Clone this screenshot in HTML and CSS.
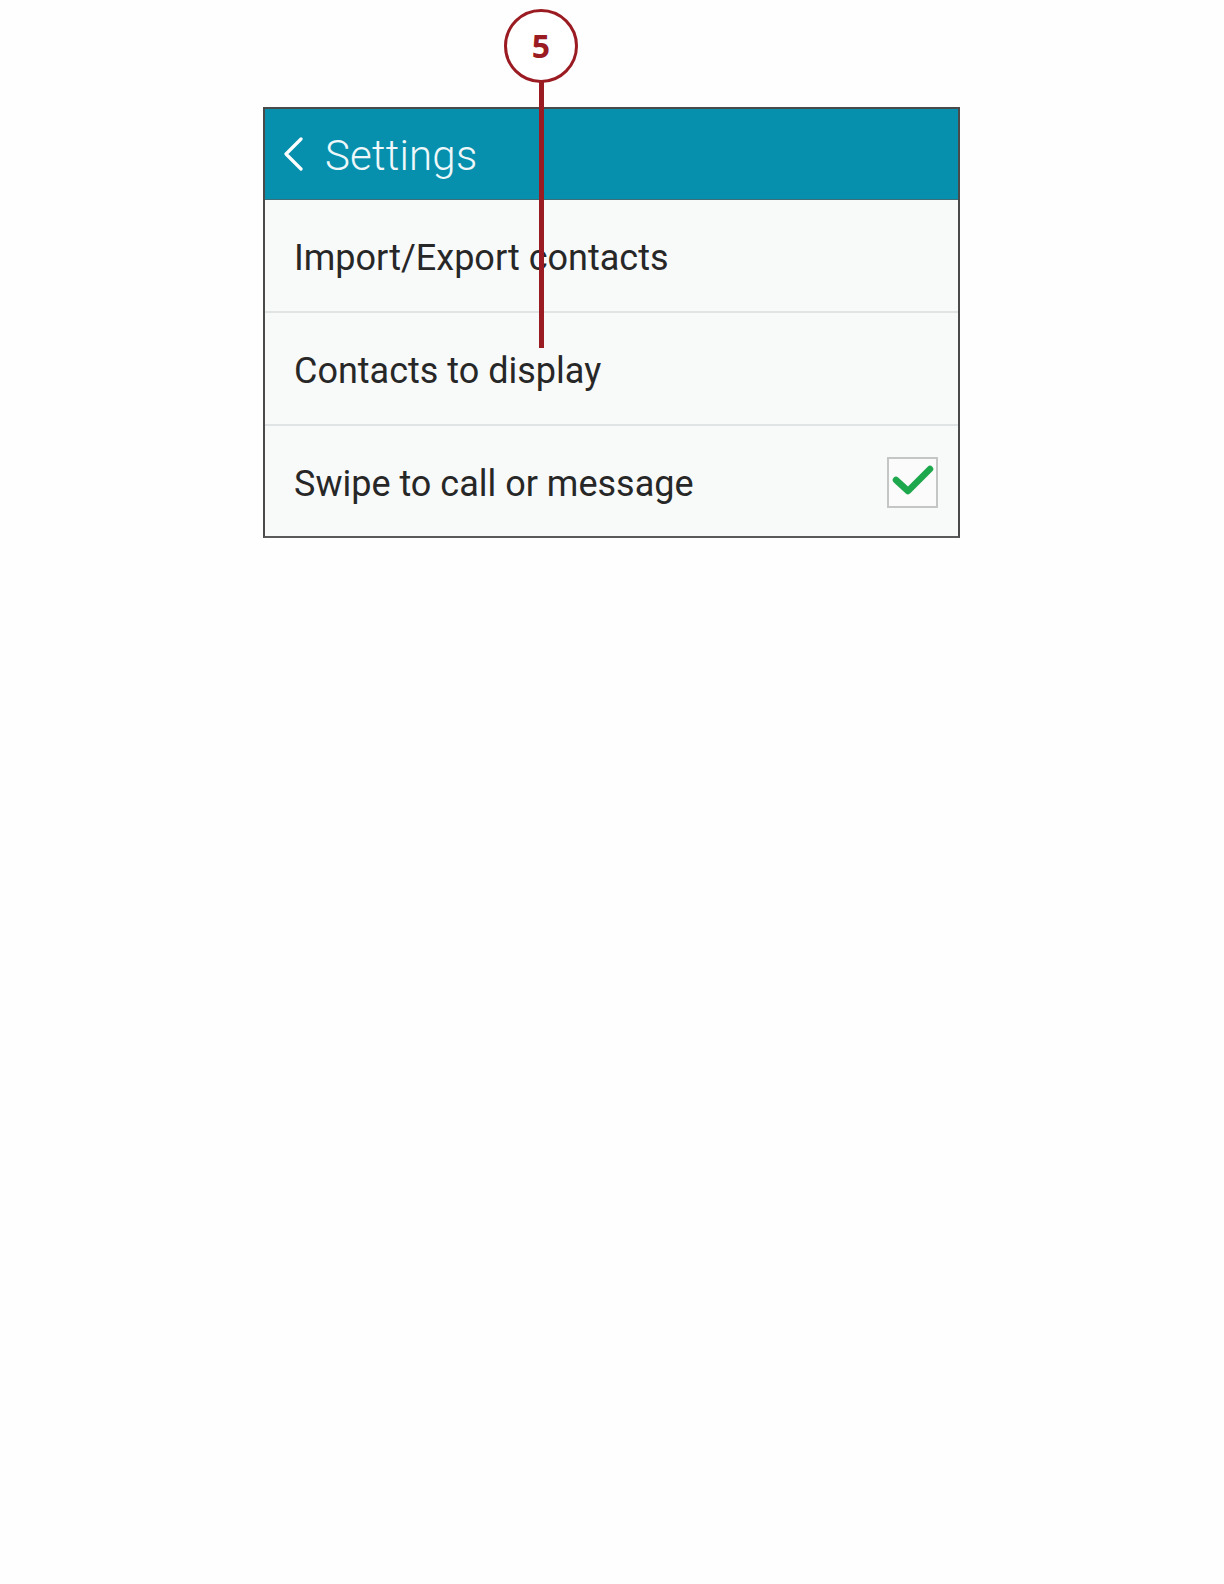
FILE: index.html
```html
<!DOCTYPE html>
<html lang="en">
<head>
<meta charset="utf-8">
<title>Settings</title>
<link rel="stylesheet" href="styles.css">
</head>
<body>
<div class="page">
  <div class="panel">
    <div class="header">
      <svg class="back" width="22" height="34" viewBox="0 0 22 34"><path d="M19 2 L4 17 L19 32" fill="none" stroke="#ffffff" stroke-width="3.2" stroke-linecap="round" stroke-linejoin="round"/></svg>
      <span class="title">Settings</span>
    </div>
    <div class="row"><span class="label">Import/Export contacts</span></div>
    <div class="row"><span class="label">Contacts to display</span></div>
    <div class="row last">
      <span class="label">Swipe to call or message</span>
      <span class="checkbox">
        <svg width="44" height="36" viewBox="0 0 44 36"><path d="M5 18 L17 29 L39 7" fill="none" stroke="#1ea84d" stroke-width="6.5" stroke-linecap="round" stroke-linejoin="round"/></svg>
      </span>
    </div>
  </div>
  <div class="callout">
    <div class="bubble">5</div>
    <div class="stem"></div>
  </div>
</div>
</body>
</html>
```
FILE: styles.css
```css
html, body {
  margin: 0;
  padding: 0;
  background: #fefefe;
}
.page {
  position: relative;
  width: 1224px;
  height: 1584px;
  padding-top: 107px;
  padding-left: 263px;
  box-sizing: border-box;
  font-family: Roboto, "Noto Sans", "Liberation Sans", sans-serif;
}
.panel {
  width: 697px;
  box-sizing: border-box;
  border: 2px solid #4a4a4a;
  border-bottom-color: #5a5a5a;
  background: #f8f9f9;
}
.header {
  height: 90px;
  background: #0790ad;
  display: flex;
  align-items: center;
  padding-left: 17px;
  border-bottom: 1px solid #3d6f7a;
}
.back {
  display: block;
}
.title {
  margin-left: 21px;
  color: #eef8fa;
  font-size: 42px;
  font-weight: 300;
  letter-spacing: 0.2px;
  padding-top: 2px;
}
.row {
  height: 113px;
  display: flex;
  align-items: center;
  justify-content: space-between;
  padding: 4px 20px 0 29px;
  box-sizing: border-box;
  border-bottom: 2px solid #e1e4e5;
}
.row.last {
  border-bottom: none;
  height: 110px;
  padding-top: 6px;
}
.label {
  font-size: 36px;
  color: #272727;
  font-weight: 400;
}
.checkbox {
  width: 51px;
  height: 51px;
  box-sizing: border-box;
  border: 2px solid #c4c6c6;
  background: #fbfbfb;
  display: flex;
  align-items: center;
  justify-content: center;
  margin-top: -4px;
}
.checkbox svg {
  display: block;
  margin-top: -4px;
}
.callout {
  position: absolute;
  left: 504px;
  top: 9px;
  width: 74px;
  display: flex;
  flex-direction: column;
  align-items: center;
}
.bubble {
  width: 74px;
  height: 74px;
  box-sizing: border-box;
  border: 3px solid #9b1b22;
  border-radius: 50%;
  background: #ffffff;
  color: #9b1b22;
  font-family: "Open Sans", "Liberation Sans", sans-serif;
  font-weight: 700;
  font-size: 32px;
  display: flex;
  align-items: center;
  justify-content: center;
  line-height: 1;
}
.stem {
  width: 5px;
  height: 266px;
  background: #9b1b22;
  margin-top: -1px;
}
```
